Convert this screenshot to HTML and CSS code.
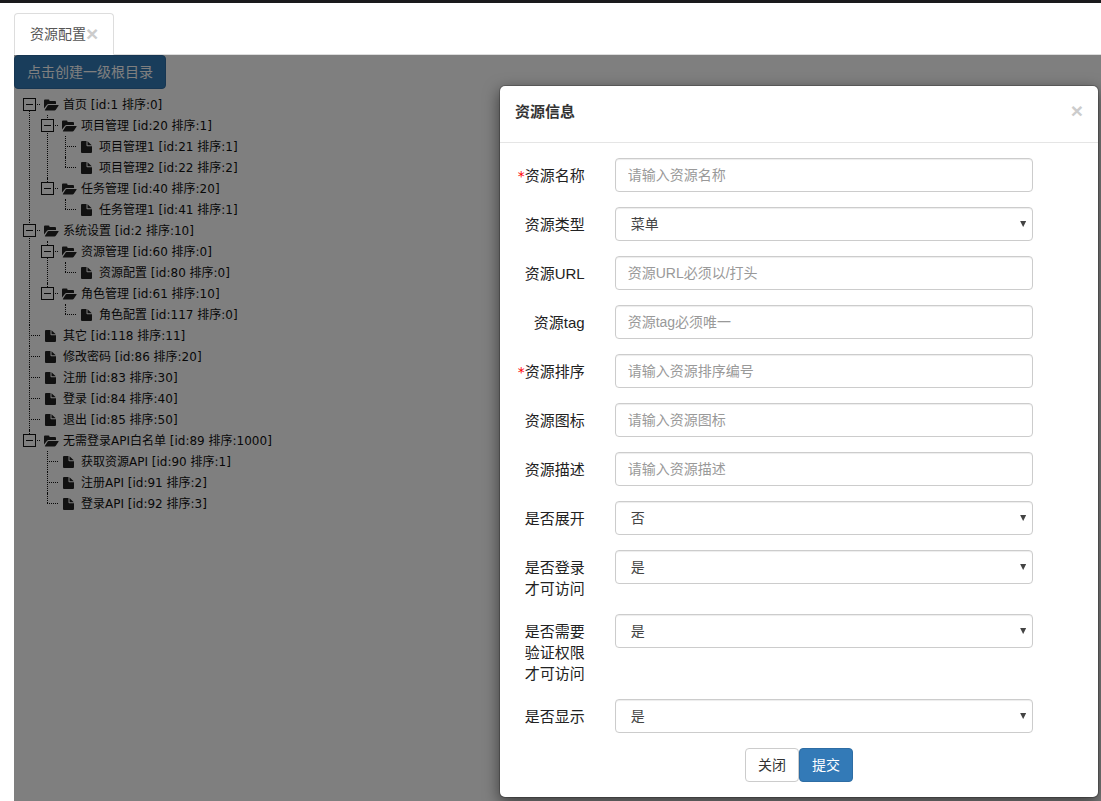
FILE: index.html
```html
<!DOCTYPE html>
<html lang="zh-CN">
<head>
<meta charset="utf-8">
<title>资源配置</title>
<link rel="stylesheet" href="styles.css">
</head>
<body>
<svg width="0" height="0" class="sprite" aria-hidden="true">
  <symbol id="folder" viewBox="0 0 15 12"><path d="M0 1.500Q0 .5 1 .5H4.500Q5.500 .5 5.500 1.500V2H11Q12 2 12 3V5H4.500Q3.500 5 3 5.700L0 9.500Z"/><path d="M4.500 6H14.200Q15 6 14.500 6.700L11.800 10.800Q11.300 11.500 10.500 11.500H1.300Q.5 11.500 1 10.700L3.700 6.600Q4 6 4.500 6Z"/></symbol>
  <symbol id="file" viewBox="0 0 11 12"><path d="M1 0H5.500V4.500Q5.500 5.200 6.200 5.200H11V11Q11 12 10 12H1Q0 12 0 11V1Q0 0 1 0Z"/><path d="M6.500 .2L10.800 4.300H6.500Z"/></symbol>
</svg>
<div class="topbar"></div>
<nav class="tabs"><div class="tab"><a href="#res">资源配置</a><button type="button" class="close" aria-label="关闭标签">×</button></div></nav>
<main class="content" id="res">
  <section class="page">
    <button type="button" class="btn primary">点击创建一级根目录</button>
    <ul class="tree" id="tree"></ul>
  </section>
  <div class="backdrop">
    <form class="modal" role="dialog" aria-labelledby="title">
      <header class="modal-header"><h4 id="title">资源信息</h4><button type="button" class="close" aria-label="关闭窗口">×</button></header>
      <div class="modal-body">
        <div class="row"><label for="name"><i>*</i>资源名称</label><div class="field"><input id="name" placeholder="请输入资源名称"></div></div>
        <div class="row"><label for="type">资源类型</label><div class="field pick"><select id="type"><option>菜单</option></select></div></div>
        <div class="row"><label for="url">资源URL</label><div class="field"><input id="url" placeholder="资源URL必须以/打头"></div></div>
        <div class="row"><label for="tag">资源tag</label><div class="field"><input id="tag" placeholder="资源tag必须唯一"></div></div>
        <div class="row"><label for="sort"><i>*</i>资源排序</label><div class="field"><input id="sort" placeholder="请输入资源排序编号"></div></div>
        <div class="row"><label for="icon">资源图标</label><div class="field"><input id="icon" placeholder="请输入资源图标"></div></div>
        <div class="row"><label for="desc">资源描述</label><div class="field"><input id="desc" placeholder="请输入资源描述"></div></div>
        <div class="row"><label for="open">是否展开</label><div class="field pick"><select id="open"><option>否</option></select></div></div>
        <div class="row"><label for="login">是否登录才可访问</label><div class="field pick"><select id="login"><option>是</option></select></div></div>
        <div class="row"><label for="auth">是否需要验证权限才可访问</label><div class="field pick"><select id="auth"><option>是</option></select></div></div>
        <div class="row"><label for="show">是否显示</label><div class="field pick"><select id="show"><option>是</option></select></div></div>
        <div class="actions"><button type="button" class="btn plain">关闭</button><button type="submit" class="btn primary">提交</button></div>
      </div>
    </form>
  </div>
</main>
<script src="tree.js"></script>
</body>
</html>
```

FILE: tree.js
```js
const nodes = [
  ["首页 [id:1 排序:0]", [
    ["项目管理 [id:20 排序:1]", [["项目管理1 [id:21 排序:1]"], ["项目管理2 [id:22 排序:2]"]]],
    ["任务管理 [id:40 排序:20]", [["任务管理1 [id:41 排序:1]"]]]
  ]],
  ["系统设置 [id:2 排序:10]", [
    ["资源管理 [id:60 排序:0]", [["资源配置 [id:80 排序:0]"]]],
    ["角色管理 [id:61 排序:10]", [["角色配置 [id:117 排序:0]"]]]
  ]],
  ["其它 [id:118 排序:11]"],
  ["修改密码 [id:86 排序:20]"],
  ["注册 [id:83 排序:30]"],
  ["登录 [id:84 排序:40]"],
  ["退出 [id:85 排序:50]"],
  ["无需登录API白名单 [id:89 排序:1000]", [
    ["获取资源API [id:90 排序:1]"], ["注册API [id:91 排序:2]"], ["登录API [id:92 排序:3]"]
  ]]
];

function render([text, children]) {
  const toggle = children
    ? '<button type="button" class="toggle" aria-label="折叠"></button>'
    : "";
  const icon = children ? "folder" : "file";
  const sub = children ? `<ul>${children.map(render).join("")}</ul>` : "";
  return `<li><div class="node"><span class="switch">${toggle}</span>` +
    `<svg class="${icon}" aria-hidden="true"><use href="#${icon}"/></svg>` +
    `<a href="#res">${text}</a></div>${sub}</li>`;
}

document.getElementById("tree").innerHTML = nodes.map(render).join("");
```

FILE: styles.css
```css
* { box-sizing: border-box; }

body {
  margin: 0;
  min-height: 100vh;
  display: flex;
  flex-direction: column;
  background: #fff;
  color: #333;
  font: 14px/20px "Liberation Sans", "Noto Sans CJK SC", sans-serif;
}

button, input, select { font: inherit; color: inherit; }
a { color: inherit; text-decoration: none; }
.sprite { position: absolute; }

.topbar { height: 3px; background: #1a1a1c; }

.tabs {
  display: flex;
  margin-left: 14px;
  padding-top: 10px;
  border-bottom: 1px solid #ddd;
}
.tab {
  display: flex;
  align-items: center;
  height: 42px;
  margin-bottom: -1px;
  padding: 0 15px;
  border: 1px solid #ddd;
  border-bottom-color: #fff;
  border-radius: 4px 4px 0 0;
  background: #fff;
  color: #555;
}
.close {
  padding: 0;
  border: 0;
  background: none;
  color: #ccc;
  font-size: 21px;
  font-weight: bold;
  line-height: 20px;
}

.content {
  flex: 1;
  display: grid;
  margin-left: 14px;
}
.page, .backdrop { grid-area: 1 / 1; min-width: 0; }
.page { isolation: isolate; }

.btn {
  height: 34px;
  padding: 0 12px;
  border: 1px solid #ccc;
  border-radius: 4px;
  background: #fff;
}
.primary { background: #337ab7; border-color: #2e6da4; color: #fff; }

.tree, .tree ul { margin: 0; padding: 0; list-style: none; }
.tree {
  padding: 5px;
  color: #111;
  font: 12px/21px "DejaVu Sans", "Noto Sans CJK SC", sans-serif;
}
.tree ul { padding-left: 18px; }
.tree li { position: relative; }
.tree li::before {
  content: "";
  position: absolute;
  left: 10px;
  top: 0;
  bottom: 0;
  border-left: 1px dotted #111;
}
.tree > li:first-child::before { top: 10px; }
.tree li:last-child::before { bottom: auto; height: 10px; }
.node { display: flex; align-items: center; height: 21px; }
.node a { padding-top: 1px; }
.switch {
  position: relative;
  flex: none;
  display: flex;
  align-items: center;
  width: 25px;
  height: 21px;
  padding-left: 4px;
}
.switch::before {
  content: "";
  position: absolute;
  left: 10px;
  top: 10px;
  width: 11px;
  border-top: 1px dotted #111;
}
.toggle {
  position: relative;
  width: 13px;
  height: 13px;
  padding: 0;
  border: 1px solid #111;
  background: linear-gradient(#111, #111) center / 7px 1px no-repeat #fff;
}
.folder, .file { flex: none; height: 12px; fill: #222; }
.folder { width: 15px; margin-right: 4px; }
.file { width: 11px; margin: 0 7px 0 1px; }

.backdrop {
  position: relative;
  display: flex;
  justify-content: flex-end;
  align-items: flex-start;
  padding: 30px 2px 3px 0;
  background: rgba(0, 0, 0, .5);
}
.modal {
  width: 600px;
  max-width: 100%;
  border: 1px solid rgba(0, 0, 0, .2);
  border-radius: 6px;
  background: #fff;
  background-clip: padding-box;
  box-shadow: 0 5px 15px rgba(0, 0, 0, .5);
}
.modal-header {
  display: flex;
  justify-content: space-between;
  align-items: flex-start;
  padding: 15px 15px 20px;
  border-bottom: 1px solid #e5e5e5;
}
.modal-header h4 { margin: 0; font-size: 15px; line-height: 21px; }
.modal-body { padding: 15px 0; }

.row {
  display: grid;
  grid-template-columns: 2fr 9fr 1fr;
  margin-bottom: 15px;
}
.row label {
  padding: 7px 15px 0;
  color: #222;
  font-size: 15px;
  line-height: 21px;
  text-align: right;
}
.row i {
  margin-left: -8px;
  color: #f00;
  font-family: "DejaVu Sans", sans-serif;
  font-size: 14px;
  font-style: normal;
  line-height: 1;
}
.field { position: relative; padding: 0 15px; }
.field input, .field select {
  display: block;
  width: 100%;
  height: 34px;
  padding: 0 12px;
  border: 1px solid #ccc;
  border-radius: 4px;
  background: #fff;
  box-shadow: inset 0 1px 1px rgba(0, 0, 0, .075);
  color: #444;
}
.field input::placeholder { color: #999; opacity: 1; }
.field select { appearance: none; padding: 0 15px; }
.pick::after {
  content: "";
  position: absolute;
  right: 22px;
  top: 14px;
  width: 6px;
  height: 6px;
  background: #444;
  clip-path: polygon(0 0, 100% 0, 50% 100%);
  pointer-events: none;
}
.actions { display: flex; justify-content: center; }
```
